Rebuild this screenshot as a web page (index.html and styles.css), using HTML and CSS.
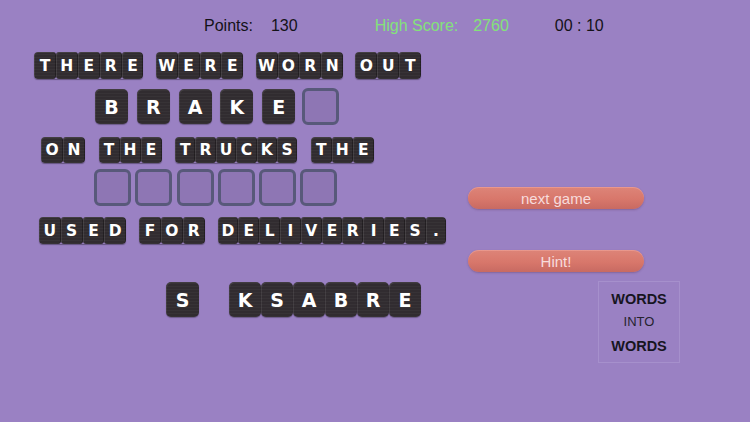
FILE: index.html
```html
<!DOCTYPE html>
<html>
<head>
<meta charset="utf-8">
<link rel="stylesheet" href="styles.css">
</head>
<body>
<div class="header">
  <span class="pts">Points:</span><span class="ptsv">130</span>
  <span class="hs">High Score:</span><span class="hsv">2760</span>
  <span class="time">00 : 10</span>
</div>
<div class="main">
  <div class="game">
    <div class="row r1">
      <div class="word"><span class="t">T</span><span class="t">H</span><span class="t">E</span><span class="t">R</span><span class="t">E</span></div>
      <div class="word"><span class="t">W</span><span class="t">E</span><span class="t">R</span><span class="t">E</span></div>
      <div class="word"><span class="t">W</span><span class="t">O</span><span class="t">R</span><span class="t">N</span></div>
      <div class="word"><span class="t">O</span><span class="t">U</span><span class="t">T</span></div>
    </div>
    <div class="row r2">
      <div class="slot"><span class="big">B</span></div>
      <div class="slot"><span class="big">R</span></div>
      <div class="slot"><span class="big">A</span></div>
      <div class="slot"><span class="big">K</span></div>
      <div class="slot"><span class="big">E</span></div>
      <div class="slot empty"></div>
    </div>
    <div class="row r3">
      <div class="word wide"><span class="t">O</span><span class="t">N</span></div>
      <div class="word"><span class="t">T</span><span class="t">H</span><span class="t">E</span></div>
      <div class="word narrow"><span class="t">T</span><span class="t">R</span><span class="t">U</span><span class="t">C</span><span class="t">K</span><span class="t">S</span></div>
      <div class="word"><span class="t">T</span><span class="t">H</span><span class="t">E</span></div>
    </div>
    <div class="row r4">
      <div class="slot empty"></div>
      <div class="slot empty"></div>
      <div class="slot empty"></div>
      <div class="slot empty"></div>
      <div class="slot empty"></div>
      <div class="slot empty"></div>
    </div>
    <div class="row r5">
      <div class="word"><span class="t">U</span><span class="t">S</span><span class="t">E</span><span class="t">D</span></div>
      <div class="word"><span class="t">F</span><span class="t">O</span><span class="t">R</span></div>
      <div class="word long"><span class="t">D</span><span class="t">E</span><span class="t">L</span><span class="t">I</span><span class="t">V</span><span class="t">E</span><span class="t">R</span><span class="t">I</span><span class="t">E</span><span class="t">S</span><span class="t">.</span></div>
    </div>
    <div class="row r6">
      <span class="pool first">S</span>
      <span class="gapper"></span>
      <span class="pool">K</span><span class="pool">S</span><span class="pool">A</span><span class="pool">B</span><span class="pool">R</span><span class="pool">E</span>
    </div>
  </div>
  <div class="side">
    <div class="btn b1">next game</div>
    <div class="btn b2">Hint!</div>
    <div class="logo">
      <div class="lw">WORDS</div>
      <div class="li">INTO</div>
      <div class="lw">WORDS</div>
    </div>
  </div>
</div>
</body>
</html>
```
FILE: styles.css
```css
html, body {
  margin: 0;
  padding: 0;
}
body {
  width: 750px;
  height: 422px;
  overflow: hidden;
  background: #9a81c3;
  font-family: "Liberation Sans", Arial, sans-serif;
}
.header {
  height: 52px;
  box-sizing: border-box;
  padding-top: 18px;
  padding-left: 204px;
  display: flex;
  font-size: 16px;
  line-height: 16px;
  color: #141218;
}
.ptsv { margin-left: 18px; }
.hs { margin-left: 77px; color: #84e27a; }
.hsv { margin-left: 15px; color: #84e27a; }
.time { margin-left: 46px; }

.main {
  display: flex;
}
.game {
  width: 460px;
  display: flex;
  flex-direction: column;
}
.row {
  display: flex;
}
.word {
  display: flex;
  border-radius: 4px;
  overflow: hidden;
  box-shadow: 0 1px 1px rgba(0,0,0,0.35);
}
.t {
  width: 21.9px;
  height: 27px;
  display: flex;
  align-items: center;
  justify-content: center;
  color: #fff;
  font-family: "DejaVu Sans", Verdana, sans-serif;
  font-weight: bold;
  font-size: 15.5px;
  background:
    repeating-linear-gradient(0deg, rgba(255,255,255,0.03) 0 1px, rgba(0,0,0,0) 1px 3px),
    #312c30;
  box-shadow: inset 1px 1px 0 rgba(255,255,255,0.09), inset -1px 0 0 rgba(0,0,0,0.3);
  border-radius: 3px;
}
.r1 { margin-left: 34px; gap: 12.3px; }
.r3 { margin-left: 41px; gap: 13.5px; margin-top: 12px; }
.r3 .t { width: 21px; height: 26px; }
.r3 .wide .t { width: 22px; }
.r3 .narrow .t { width: 20.4px; }
.r5 { margin-left: 39px; gap: 13px; margin-top: 11px; }
.r5 .t { width: 21.8px; }
.r5 .long .t { width: 20.8px; }

.r2 { margin-left: 93px; gap: 4.8px; margin-top: 9px; }
.r4 { margin-left: 94px; gap: 4.3px; margin-top: 6px; }
.slot {
  width: 37px;
  height: 37px;
  display: flex;
  align-items: center;
  justify-content: center;
}
.big, .pool {
  width: 33px;
  height: 35px;
  border-radius: 5px;
  display: flex;
  align-items: center;
  justify-content: center;
  color: #fff;
  font-family: "DejaVu Sans", Verdana, sans-serif;
  font-weight: bold;
  font-size: 19px;
  background:
    repeating-linear-gradient(0deg, rgba(255,255,255,0.03) 0 1px, rgba(0,0,0,0) 1px 3px),
    #312c30;
  box-shadow: inset 1px 1px 0 rgba(255,255,255,0.08), 0 1px 1px rgba(0,0,0,0.3);
}
.empty {
  box-sizing: border-box;
  border: 3px solid #58597a;
  border-radius: 6px;
  background: #8e76b4;
}
.r6 { margin-left: 166px; margin-top: 38px; }
.pool { width: 32px; }
.pool.first { width: 33px; }
.gapper { width: 30px; }

.side {
  display: flex;
  flex-direction: column;
  padding-left: 8px;
}
.btn {
  width: 176px;
  height: 22px;
  box-sizing: border-box;
  border-radius: 11px;
  background: linear-gradient(180deg, #dd8478 0%, #d8776b 55%, #c86a62 100%);
  box-shadow: 0 1px 2px rgba(90,50,80,0.35), inset 0 1px 0 rgba(255,190,180,0.35);
  color: #f7dcdc;
  font-size: 15px;
  line-height: 23px;
  text-align: center;
}
.b1 { margin-top: 135px; }
.b2 { margin-top: 41px; }
.logo {
  margin-top: 9px;
  margin-left: 130px;
  width: 82px;
  height: 82px;
  box-sizing: border-box;
  border: 1px solid #a690cc;
  display: flex;
  flex-direction: column;
  align-items: center;
  justify-content: center;
  color: #17151f;
}
.lw {
  font-weight: bold;
  font-size: 14.5px;
  line-height: 16px;
}
.li {
  font-size: 13px;
  line-height: 14px;
  margin: 8px 0 9px;
  color: #26232e;
}
```
